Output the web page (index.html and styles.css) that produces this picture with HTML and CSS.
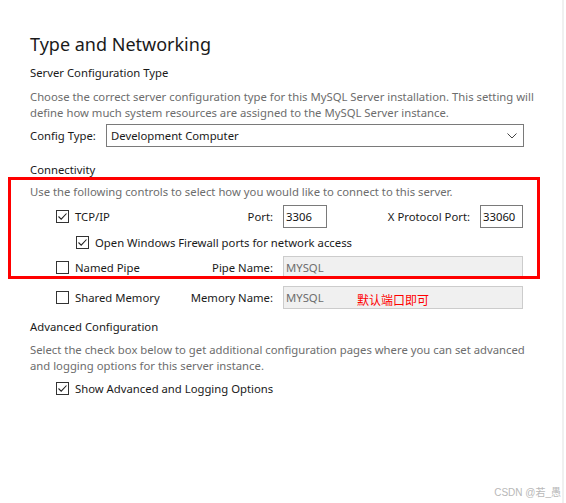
FILE: index.html
```html
<!DOCTYPE html>
<html lang="en">
<head>
<meta charset="utf-8">
<title>Type and Networking</title>
<link rel="stylesheet" href="styles.css">
</head>
<body>
<div class="shell">
  <main class="page">
    <h1 class="title">Type and Networking</h1>

    <h2 class="section">Server Configuration Type</h2>
    <p class="desc">Choose the correct server configuration type for this MySQL Server installation. This setting will define how much system resources are assigned to the MySQL Server instance.</p>

    <div class="config-row">
      <span class="label">Config Type:</span>
      <div class="select">
        <span>Development Computer</span>
        <svg class="chev" width="10" height="6" viewBox="0 0 10 6"><path d="M0.5 0.5 L5 5 L9.5 0.5" fill="none" stroke="#444" stroke-width="1"/></svg>
      </div>
    </div>

    <h2 class="section conn-head">Connectivity</h2>
    <p class="desc conn-desc">Use the following controls to select how you would like to connect to this server.</p>

    <div class="conn-row row-tcp">
      <label class="check"><span class="box checked"><svg width="11" height="11" viewBox="0 0 11 11"><path d="M1.5 5.5 L4.2 8.2 L9.5 2.5" fill="none" stroke="#222" stroke-width="1.1"/></svg></span>TCP/IP</label>
      <span class="field-label">Port:</span>
      <span class="input">3306</span>
      <span class="field-label">X Protocol Port:</span>
      <span class="input">33060</span>
    </div>

    <div class="fw-row">
      <label class="check"><span class="box checked"><svg width="11" height="11" viewBox="0 0 11 11"><path d="M1.5 5.5 L4.2 8.2 L9.5 2.5" fill="none" stroke="#222" stroke-width="1.1"/></svg></span>Open Windows Firewall ports for network access</label>
    </div>

    <div class="conn-row">
      <label class="check"><span class="box"></span>Named Pipe</label>
      <span class="field-label">Pipe Name:</span>
      <span class="input wide disabled">MYSQL</span>
    </div>

    <div class="conn-row row-mem">
      <label class="check"><span class="box"></span>Shared Memory</label>
      <span class="field-label">Memory Name:</span>
      <span class="input wide disabled">MYSQL</span>
    </div>

    <h2 class="section adv-head">Advanced Configuration</h2>
    <p class="desc adv-desc">Select the check box below to get additional configuration pages where you can set advanced and logging options for this server instance.</p>

    <div class="adv-row">
      <label class="check"><span class="box checked"><svg width="11" height="11" viewBox="0 0 11 11"><path d="M1.5 5.5 L4.2 8.2 L9.5 2.5" fill="none" stroke="#222" stroke-width="1.1"/></svg></span>Show Advanced and Logging Options</label>
    </div>
  </main>

  <div class="highlight"></div>
  <div class="note">默认端口即可</div>
  <div class="watermark">CSDN @若_愚</div>
</div>
</body>
</html>
```

FILE: styles.css
```css
html, body {
  margin: 0;
  padding: 0;
  background: #ffffff;
}

body {
  width: 566px;
  height: 503px;
  overflow: hidden;
  font-family: "Noto Sans", "Open Sans", "Liberation Sans", sans-serif;
  font-size: 11.3px;
  color: #1a1a1a;
}

.shell {
  position: relative;
  width: 562px;
  height: 503px;
  border-right: 2px solid #f0f0f0;
}

.page {
  padding: 32px 0 0 30px;
}

.title {
  margin: 0;
  font-size: 18px;
  font-weight: 400;
  line-height: 24px;
  color: #1a1a1a;
}

.section {
  margin: 9px 0 0;
  font-size: 11.3px;
  font-weight: 400;
  line-height: 16px;
  color: #1a1a1a;
}

.desc {
  margin: 8px 0 0;
  width: 505px;
  line-height: 16px;
  color: #6d6d6d;
}

.config-row {
  display: flex;
  align-items: center;
  margin-top: 3px;
  height: 23px;
}

.config-row .label {
  width: 76px;
}

.select {
  box-sizing: border-box;
  width: 418px;
  height: 23px;
  border: 1px solid #7a7a7a;
  display: flex;
  align-items: center;
  justify-content: space-between;
  padding: 0 6px 0 4px;
  background: #fff;
}

.chev {
  display: block;
}

.conn-head {
  margin-top: 15px;
}

.conn-desc {
  margin-top: 6px;
}

.conn-row {
  display: grid;
  grid-template-columns: 134px 93px 44px 153px 43px;
  align-items: center;
  height: 23px;
  margin-left: 26px;
}

.row-tcp {
  margin-top: 5px;
}

.row-mem {
  margin-top: 7px;
}

.check {
  display: flex;
  align-items: center;
  gap: 6px;
  white-space: nowrap;
}

.box {
  box-sizing: border-box;
  width: 13px;
  height: 13px;
  border: 1px solid #333;
  background: #fff;
  display: flex;
  align-items: center;
  justify-content: center;
  flex: none;
}

.box svg {
  display: block;
}

.field-label {
  text-align: right;
  padding-right: 10px;
  white-space: nowrap;
}

.conn-row .field-label:nth-of-type(2) {
  padding-right: 11px;
}

.input {
  box-sizing: border-box;
  height: 23px;
  border: 1px solid #7a7a7a;
  padding: 0 2px;
  display: flex;
  align-items: center;
  background: #fff;
  color: #111;
}

.input.wide {
  grid-column: 3 / 6;
}

.input.disabled {
  background: #f0f0f0;
  border-color: #cccccc;
  color: #6d6d6d;
}

.fw-row {
  height: 28px;
  display: flex;
  align-items: center;
  margin-left: 46px;
}

.adv-head {
  margin-top: 10px;
}

.adv-desc {
  margin-top: 7px;
}

.adv-row {
  margin: 6px 0 0 26px;
  height: 16px;
  display: flex;
  align-items: center;
}

.highlight {
  position: absolute;
  left: 8px;
  top: 177px;
  width: 526px;
  height: 96px;
  border: 3px solid #ff0000;
}

.note {
  position: absolute;
  left: 357px;
  top: 292px;
  font-family: "Noto Sans CJK SC", sans-serif;
  font-size: 12px;
  line-height: 16px;
  color: #ff0000;
}

.watermark {
  position: absolute;
  right: 1px;
  bottom: 4px;
  font-family: "Liberation Sans", "Noto Sans CJK SC", sans-serif;
  font-size: 10px;
  line-height: 12px;
  color: #b8b8b8;
}
```
